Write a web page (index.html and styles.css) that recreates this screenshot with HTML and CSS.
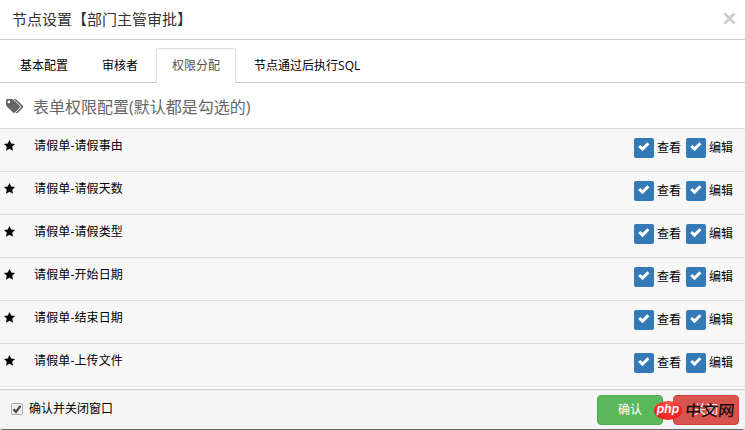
FILE: index.html
```html
<!DOCTYPE html>
<html lang="zh-CN">
<head>
<meta charset="utf-8">
<title>节点设置</title>
<link rel="stylesheet" href="styles.css">
</head>
<body>
<svg class="defs" width="0" height="0">
  <symbol id="star" viewBox="0 0 12 12"><path d="M5.500 0 7.200 3.600 11 4.100 8.200 6.700 9 10.700 5.500 8.800 2 10.700 2.800 6.700 0 4.100 3.800 3.600z"/></symbol>
  <symbol id="check" viewBox="0 0 12 10"><path d="M1.200 4 4.500 7.100 10.400 1.300" fill="none" stroke="#fff" stroke-width="3"/></symbol>
</svg>
<div class="modal">
  <header class="modal-header">
    <h1>节点设置【部门主管审批】</h1>
    <button class="close" aria-label="关闭窗口"><svg width="13" height="13" viewBox="0 0 13 13"><path d="M1.500 1.500l10 10M11.500 1.500l-10 10"/></svg></button>
  </header>
  <nav class="tabs">
    <a class="tab">基本配置</a>
    <a class="tab">审核者</a>
    <a class="tab active">权限分配</a>
    <a class="tab">节点通过后执行SQL</a>
  </nav>
  <h2 class="section-title">
    <svg width="18" height="15" viewBox="0 0 18 15"><path fill-rule="evenodd" d="M0 1.300Q0 0 1.300 0H5.500Q6.600 0 7.500.8L13.700 6.800Q14.500 7.700 13.700 8.600L9 13.500Q8 14.400 7 13.500L.8 7.500Q0 6.700 0 5.600zM2.900 1.600A1.300 1.300 0 1 0 2.900 4.200 1.300 1.300 0 1 0 2.900 1.600z"/><path d="M7.700 0H8.800Q9.900.1 10.700.8L16.900 6.800Q17.700 7.700 16.900 8.600L12.200 13.500Q11 14.600 9.900 13.500L14.600 8.700Q15.500 7.700 14.600 6.700z"/></svg>
    <span>表单权限配置(默认都是勾选的)</span>
  </h2>
  <ul class="rows">
    <li class="row"><svg class="star"><use href="#star"/></svg><span class="name">请假单-请假事由</span><span class="box"><svg><use href="#check"/></svg></span><span class="perm">查看</span><span class="box"><svg><use href="#check"/></svg></span><span class="perm">编辑</span></li>
    <li class="row"><svg class="star"><use href="#star"/></svg><span class="name">请假单-请假天数</span><span class="box"><svg><use href="#check"/></svg></span><span class="perm">查看</span><span class="box"><svg><use href="#check"/></svg></span><span class="perm">编辑</span></li>
    <li class="row"><svg class="star"><use href="#star"/></svg><span class="name">请假单-请假类型</span><span class="box"><svg><use href="#check"/></svg></span><span class="perm">查看</span><span class="box"><svg><use href="#check"/></svg></span><span class="perm">编辑</span></li>
    <li class="row"><svg class="star"><use href="#star"/></svg><span class="name">请假单-开始日期</span><span class="box"><svg><use href="#check"/></svg></span><span class="perm">查看</span><span class="box"><svg><use href="#check"/></svg></span><span class="perm">编辑</span></li>
    <li class="row"><svg class="star"><use href="#star"/></svg><span class="name">请假单-结束日期</span><span class="box"><svg><use href="#check"/></svg></span><span class="perm">查看</span><span class="box"><svg><use href="#check"/></svg></span><span class="perm">编辑</span></li>
    <li class="row"><svg class="star"><use href="#star"/></svg><span class="name">请假单-上传文件</span><span class="box"><svg><use href="#check"/></svg></span><span class="perm">查看</span><span class="box"><svg><use href="#check"/></svg></span><span class="perm">编辑</span></li>
  </ul>
  <footer class="modal-footer">
    <span class="mini-check"><svg width="10" height="10" viewBox="0 0 10 10"><path d="M1.500 5.200 4 7.800 8.500 1.800"/></svg></span>
    <span class="confirm-label">确认并关闭窗口</span>
    <button class="btn ok">确认</button>
    <button class="btn cancel">关闭</button>
    <div class="watermark"><span class="php"><span class="php-text">php</span></span><span class="cn">中文网</span></div>
  </footer>
</div>
</body>
</html>
```

FILE: styles.css
```css
* { box-sizing: border-box; }
body {
  margin: 0;
  font: 12px/18px "Open Sans", "Noto Sans CJK SC", sans-serif;
  color: #000;
  background: #fff;
}
.defs { position: absolute; }
svg { display: block; }
button { border: 0; font: inherit; }
.modal {
  height: 430px;
  display: flex;
  flex-direction: column;
  overflow: hidden;
  border-bottom: 1px solid #666;
  border-radius: 0 3px 3px 3px;
}
.modal-header {
  height: 40px;
  flex: none;
  display: flex;
  justify-content: space-between;
  padding: 9px 9px 0 12px;
  border-bottom: 1px solid #ccc;
}
h1 { margin: 0; font-size: 15px; line-height: 21px; font-weight: 400; color: #333; }
.close { padding: 3px 0 0; height: 16px; background: none; }
.close path { stroke: #ccc; stroke-width: 2.6; fill: none; }
.tabs {
  height: 43px;
  flex: none;
  display: flex;
  gap: 2px;
  padding: 8px 0 0 4px;
  border-bottom: 1px solid #ccc;
}
.tab {
  height: 35px;
  padding: 8px 15px 0;
  border: 1px solid transparent;
  border-radius: 4px 4px 0 0;
  white-space: nowrap;
}
.tab.active { color: #555; background: #fff; border-color: #ddd #ddd #fff; }
.section-title {
  height: 45px;
  flex: none;
  display: flex;
  gap: 9px;
  margin: 0;
  padding: 12px 0 0 6px;
  font-size: 16px;
  line-height: 24px;
  font-weight: 400;
  color: #666;
}
.section-title svg { margin-top: 4px; fill: #666; }
.rows {
  height: 259px;
  flex: none;
  margin: 0;
  padding: 0;
  list-style: none;
  background: #f7f7f7;
  border-bottom: 1px solid #e5e5e5;
}
.row {
  height: 43px;
  display: flex;
  align-items: flex-start;
  padding: 0 12px 0 4px;
  border-top: 1px solid #ddd;
}
.star { width: 12px; height: 12px; margin-top: 11px; }
.name { flex: 1; margin: 8px 0 0 18px; letter-spacing: .13px; }
.box {
  width: 20px;
  height: 20px;
  margin-top: 9px;
  padding: 4px;
  border-radius: 2px;
  background: #337ab7;
}
.box svg { width: 12px; height: 10px; }
.perm { width: 24px; margin: 10px 5px 0 3px; }
.perm:last-child { margin-right: 0; }
.modal-footer {
  position: relative;
  flex: 1;
  display: flex;
  align-items: flex-start;
  margin-top: 2px;
  padding: 5px 6px 0 11px;
  border-top: 1px solid #ccc;
  background: #f5f5f5;
}
.mini-check {
  width: 12px;
  height: 12px;
  margin-top: 8px;
  border: 1px solid #aaa;
  border-radius: 2px;
  background: #eee;
}
.mini-check path { fill: none; stroke: #444; stroke-width: 2.2; }
.confirm-label { flex: 1; margin: 5px 0 0 6px; }
.btn {
  width: 66px;
  height: 30px;
  padding: 0;
  border: 1px solid;
  border-radius: 4px;
  color: #fff;
}
.ok { background: #5cb85c; border-color: #4cae4c; }
.cancel { margin-left: 10px; background: #d9534f; border-color: #d43f3a; }
.watermark { position: absolute; left: 654px; top: 11px; display: flex; }
.php {
  width: 28px;
  height: 19px;
  display: flex;
  justify-content: center;
  border-radius: 50%;
  background: radial-gradient(ellipse at 50% 20%, #ff5a4a, #f01c1c 75%);
}
.php-text {
  color: #fff;
  font: italic 600 12px/16px "Inter", sans-serif;
}
.cn {
  margin-left: 3px;
  font: 500 16.500px/17px "Noto Sans CJK SC", sans-serif;
  color: #1c0d0d;
  white-space: nowrap;
  transform: skewX(-6deg) scaleY(.92);
}
```
